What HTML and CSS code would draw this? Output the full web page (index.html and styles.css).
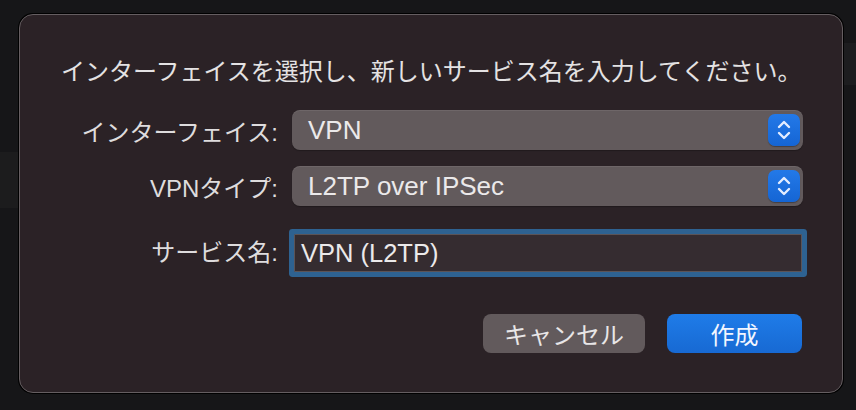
FILE: index.html
```html
<!DOCTYPE html>
<html lang="ja">
<head>
  <meta charset="UTF-8">
  <title>新しいサービス</title>
  <link rel="stylesheet" href="styles.css">
</head>
<body>

<div class="sheet">
  <p class="prompt">インターフェイスを選択し、新しいサービス名を入力してください。</p>

  <div class="form">
    <label class="label">インターフェイス:</label>
    <div class="popup">
      <span class="popup-text">VPN</span>
      <span class="stepper">
        <svg width="14" height="22" viewBox="0 0 14 22">
          <path d="M2 8 L7 3 L12 8" />
          <path d="M2 14 L7 19 L12 14" />
        </svg>
      </span>
    </div>

    <label class="label">VPNタイプ:</label>
    <div class="popup">
      <span class="popup-text">L2TP over IPSec</span>
      <span class="stepper">
        <svg width="14" height="22" viewBox="0 0 14 22">
          <path d="M2 8 L7 3 L12 8" />
          <path d="M2 14 L7 19 L12 14" />
        </svg>
      </span>
    </div>

    <label class="label label-name">サービス名:</label>
    <div class="field">VPN (L2TP)</div>
  </div>

  <div class="buttons">
    <button class="btn btn-cancel">キャンセル</button>
    <button class="btn btn-ok">作成</button>
  </div>
</div>

</body>
</html>
```

FILE: styles.css
```css
body {
  margin: 0;
  height: 410px;
  padding: 14px 0 0 19px;
  box-sizing: border-box;
  overflow: hidden;
  font-family: "Liberation Sans", "Noto Sans CJK JP", sans-serif;
  color: #e2e0e1;
  background:
    linear-gradient(90deg, transparent 0, transparent 825px, #1d1d1f 825px) 0 43px / 100% 42px no-repeat,
    linear-gradient(#1c1c1d, #1c1c1d) 0 152px / 18px 56px no-repeat,
    #161618;
}

.sheet {
  width: 824px;
  height: 379px;
  box-sizing: border-box;
  padding: 41px 40px 0 41px;
  background-color: #2b2226;
  border: 1px solid #655e61;
  border-radius: 14px;
  box-shadow: 0 0 0 1px #000;
}

.prompt {
  margin: 0;
  font-size: 24px;
  line-height: 32px;
  white-space: nowrap;
  color: #e4e2e3;
}

.form {
  display: grid;
  grid-template-columns: 217px 511px;
  grid-template-rows: 40px 40px 50px;
  column-gap: 14px;
  row-gap: 16px;
  margin-top: 22px;
  align-items: center;
}

.label {
  text-align: right;
  font-size: 24px;
  color: #dedcdd;
  white-space: nowrap;
}

.label-name {
  align-self: end;
  line-height: 38px;
}

.popup {
  display: flex;
  align-items: center;
  justify-content: space-between;
  height: 40px;
  padding: 0 3px 0 16px;
  box-sizing: border-box;
  background-color: #625a5c;
  border-radius: 8px;
  box-shadow: inset 0 1px 0 rgba(255, 255, 255, 0.08), 0 1px 1px rgba(0, 0, 0, 0.25);
}

.popup-text {
  font-size: 26px;
  color: #ebe9ea;
}

.stepper {
  display: flex;
  align-items: center;
  justify-content: center;
  width: 32px;
  height: 32px;
  border-radius: 7px;
  background: linear-gradient(#2379e8, #1565d4);
  box-shadow: 0 1px 1px rgba(0, 0, 0, 0.3);
}

.stepper svg path {
  fill: none;
  stroke: #e4edff;
  stroke-width: 2.4;
  stroke-linecap: round;
  stroke-linejoin: round;
}

.field {
  align-self: end;
  margin: 0 1px 0 2px;
  height: 38px;
  box-sizing: border-box;
  padding: 0 6px;
  line-height: 36px;
  font-size: 25.5px;
  color: #ebe9ea;
  background-color: #352c30;
  border: 1px solid #5b5457;
  box-shadow: 0 0 0 5px #2e6291;
  border-radius: 1px;
}

.buttons {
  display: flex;
  justify-content: flex-end;
  gap: 22px;
  margin-top: 42px;
}

.btn {
  height: 39px;
  border: none;
  border-radius: 8px;
  font-family: "Noto Sans CJK JP", sans-serif;
  font-size: 24px;
  color: #e8e6e7;
  cursor: pointer;
}

.btn-cancel {
  width: 162px;
  background-color: #625a5c;
}

.btn-ok {
  width: 135px;
  background: linear-gradient(#1f7ce8, #1769d3);
  color: #f2f6ff;
}
```
